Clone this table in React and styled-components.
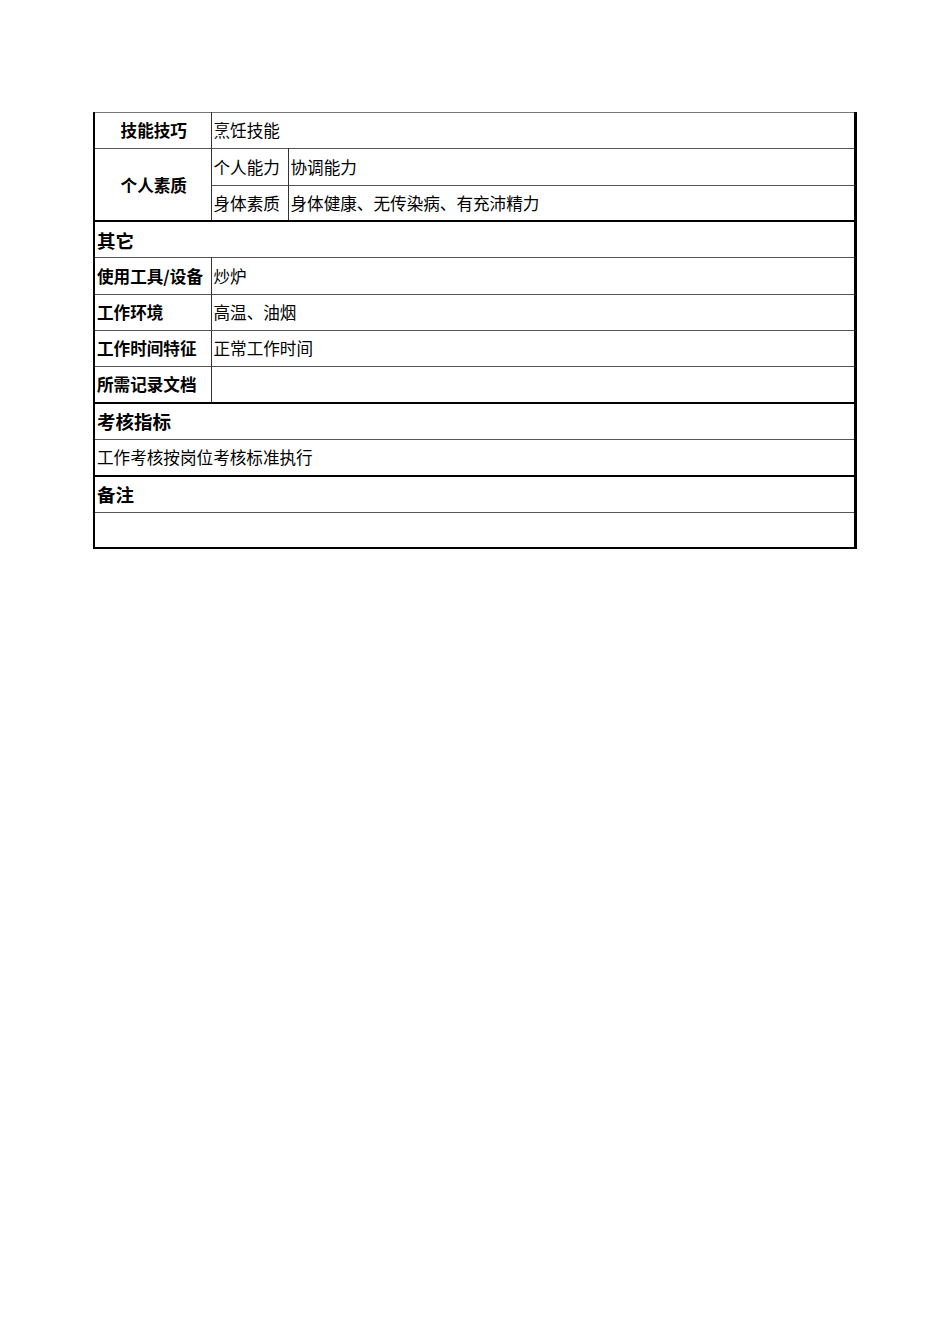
import React from 'react';
import styled, { createGlobalStyle } from 'styled-components';

const Global = createGlobalStyle`
    body {
        margin: 0;
        background: #fff;
        font-family: "Noto Sans CJK SC", "Liberation Sans", sans-serif;
        color: #000;
    }
`

const Page = styled.div`
    padding: 112px 0 0 93px;
    width: 950px;
    height: 1344px;
    box-sizing: border-box;
`

const Table = styled.table`
    width: 764px;
    border-collapse: collapse;
    table-layout: fixed;
    border-left: 2px solid #000;
    border-right: 3px solid #000;
    border-top: 1px solid #777;
    border-bottom: 2px solid #000;
`

const Row = styled.tr`
    height: 36.33px;
    border-bottom: ${props => props.$thick ? '2px solid #000' : '1px solid #555'};
`

const Cell = styled.td`
    padding: 0 0 0 2px;
    font-size: 16.6px;
    font-weight: ${props => props.$bold ? 700 : 400};
    text-align: ${props => props.$center ? 'center' : 'left'};
    border-right: 1px solid #333;
    vertical-align: middle;
    white-space: nowrap;
    line-height: 1;
`

const Heading = styled.td`
    padding: 0 0 0 2px;
    font-size: 18.5px;
    font-weight: 700;
    vertical-align: middle;
    line-height: 1;
`

const App = () => {
    return (
        <Page>
            <Global />
            <Table>
                <colgroup>
                    <col style={{ width: 117 }} />
                    <col style={{ width: 77 }} />
                    <col />
                </colgroup>
                <tbody>
                    <Row>
                        <Cell $bold $center>技能技巧</Cell>
                        <Cell colSpan={2}>烹饪技能</Cell>
                    </Row>
                    <Row>
                        <Cell $bold $center rowSpan={2}>个人素质</Cell>
                        <Cell>个人能力</Cell>
                        <Cell>协调能力</Cell>
                    </Row>
                    <Row $thick>
                        <Cell>身体素质</Cell>
                        <Cell>身体健康、无传染病、有充沛精力</Cell>
                    </Row>
                    <Row>
                        <Heading colSpan={3}>其它</Heading>
                    </Row>
                    <Row>
                        <Cell $bold>使用工具/设备</Cell>
                        <Cell colSpan={2}>炒炉</Cell>
                    </Row>
                    <Row>
                        <Cell $bold>工作环境</Cell>
                        <Cell colSpan={2}>高温、油烟</Cell>
                    </Row>
                    <Row>
                        <Cell $bold>工作时间特征</Cell>
                        <Cell colSpan={2}>正常工作时间</Cell>
                    </Row>
                    <Row $thick>
                        <Cell $bold>所需记录文档</Cell>
                        <Cell colSpan={2}></Cell>
                    </Row>
                    <Row>
                        <Heading colSpan={3}>考核指标</Heading>
                    </Row>
                    <Row $thick>
                        <Cell colSpan={3}>工作考核按岗位考核标准执行</Cell>
                    </Row>
                    <Row>
                        <Heading colSpan={3}>备注</Heading>
                    </Row>
                    <Row $thick>
                        <Cell colSpan={3}></Cell>
                    </Row>
                </tbody>
            </Table>
        </Page>
    );
};

export default App;
